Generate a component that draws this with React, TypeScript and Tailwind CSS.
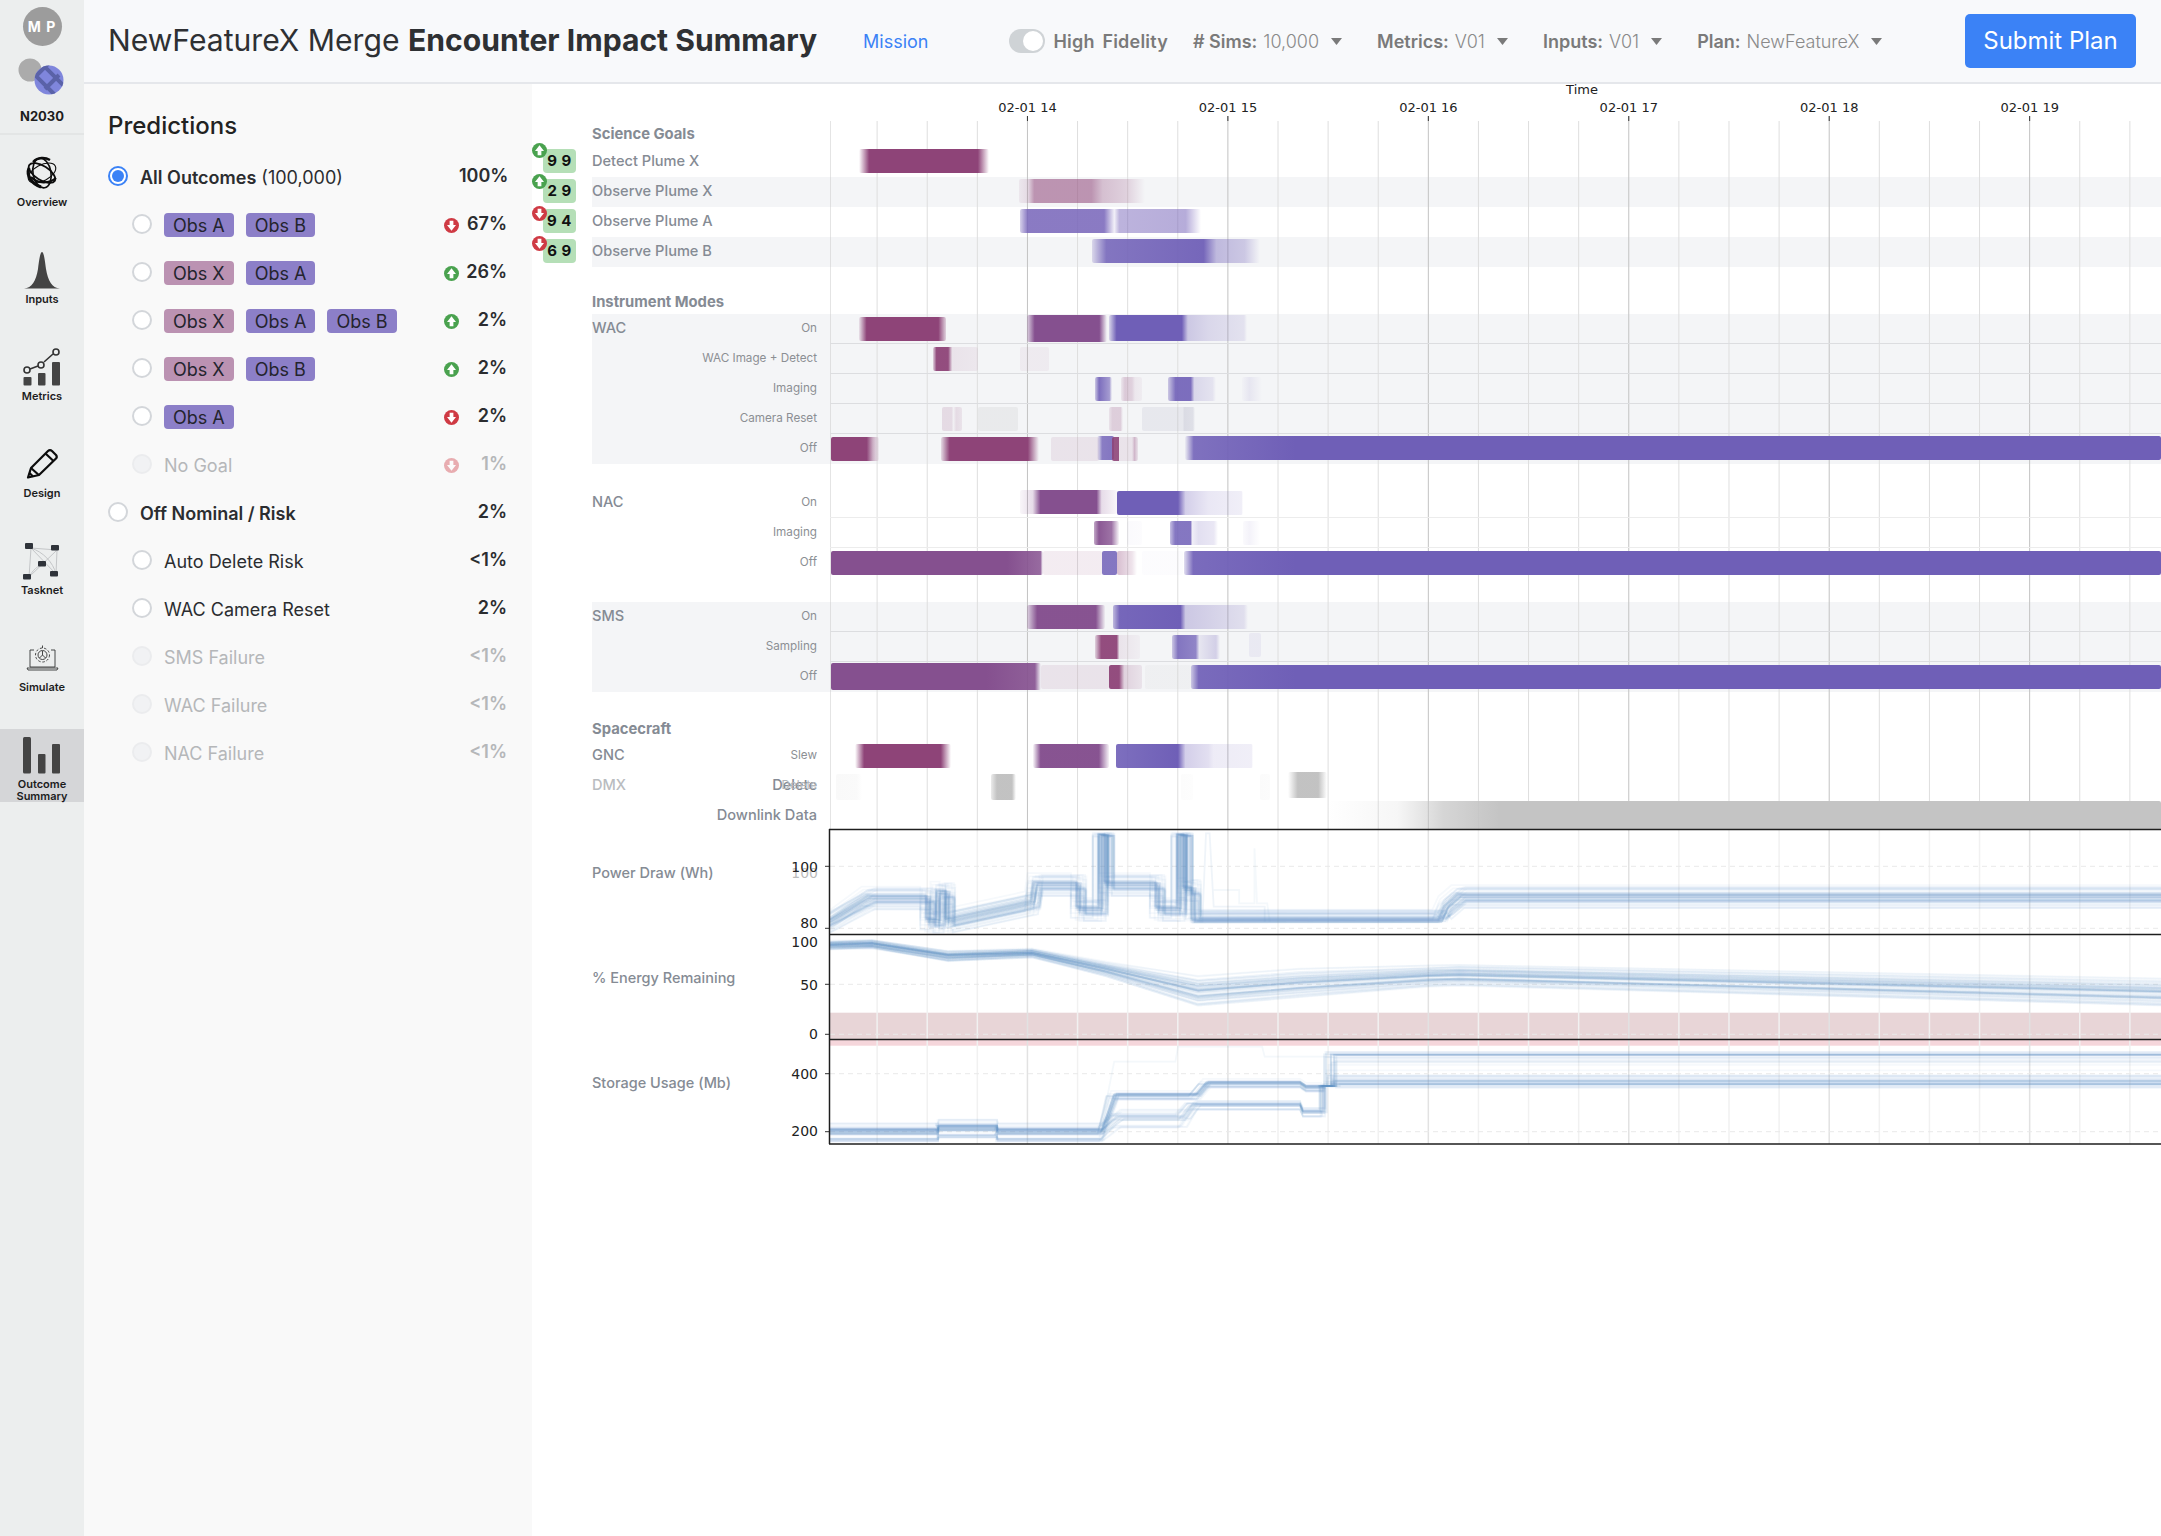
import React from "react";

const M = "#8e4478";
const MP = "#85508f";
const P = "#6f5fb7";
const G = "#9a9a9a";
const END = 3197;

type Stop = [number, number];
type Bar = { c: string; s: Stop[]; t?: number; h?: number };

function hex(c: string, a: number) {
  const r = parseInt(c.slice(1, 3), 16);
  const g = parseInt(c.slice(3, 5), 16);
  const b = parseInt(c.slice(5, 7), 16);
  return `rgba(${r},${g},${b},${a})`;
}

function BarView({ b }: { b: Bar }) {
  const x0 = b.s[0][0];
  const x1 = b.s[b.s.length - 1][0];
  const grad = b.s.map(([x, a]) => `${hex(b.c, a)} ${(((x - x0) / (x1 - x0)) * 100).toFixed(2)}%`).join(",");
  return (
    <div
      className="absolute z-10 rounded-[2px]"
      style={{
        left: x0 / 1.96 - 300,
        width: (x1 - x0) / 1.96,
        top: b.t ?? 2,
        height: b.h ?? 24,
        background: `linear-gradient(90deg,${grad})`,
      }}
    />
  );
}

function GRow({
  label,
  sub,
  bars,
  striped,
  sep,
  dim,
  bigSub,
  score,
}: {
  label?: string;
  sub?: string;
  bars: Bar[];
  striped?: boolean;
  sep?: string;
  dim?: boolean;
  bigSub?: boolean;
  score?: { v: string; up: boolean; iconTop: string };
}) {
  return (
    <div className={`flex h-[30px] ${striped ? "bg-[#f4f5f7]" : ""}`}>
      <div className="relative flex w-[238px] items-center justify-between pr-[13px]">
        {score && (
          <>
            <div className="absolute left-[-49px] top-[2px] flex h-[24px] w-[33px] items-center justify-center rounded-[4px] bg-[#b5dfb7] text-[15px] font-bold tracking-[0.5px] text-[#111]">
              {score.v}
            </div>
            <div className={`absolute left-[-60px] z-20 ${score.iconTop}`}>
              <Arrow up={score.up} />
            </div>
          </>
        )}
        <span className={`text-[14.6px] font-medium ${dim ? "text-[#b9bcc0]" : "text-[#858b94]"}`}>{label}</span>
        {sub && <span className={bigSub ? "text-[14.6px] font-medium text-[#858b94]" : "text-[11.7px] text-[#8c8f94]"}>{sub}</span>}
      </div>
      <div className={`relative flex-1 ${sep ?? ""}`}>
        {bars.map((b, i) => (
          <BarView key={i} b={b} />
        ))}
      </div>
    </div>
  );
}

function Section({ children, cls }: { children: React.ReactNode; cls: string }) {
  return <div className={`flex items-center text-[14.8px] font-bold text-[#858b94] ${cls}`}>{children}</div>;
}

function Arrow({ up, faded }: { up: boolean; faded?: boolean }) {
  const c = up ? "#4aa24f" : "#cf3a44";
  return (
    <svg width="15" height="15" viewBox="0 0 16 16" className={faded ? "opacity-40" : ""}>
      <circle cx="8" cy="8" r="8" fill={c} />
      <path
        d={up ? "M8 2.5 L12.8 8.5 H10 V13 H6 V8.5 H3.2 Z" : "M8 13.5 L12.8 7.5 H10 V3 H6 V7.5 H3.2 Z"}
        fill="#fff"
      />
    </svg>
  );
}

function Tag({ k }: { k: string }) {
  const pink = k === "Obs X";
  return (
    <span
      className={`flex h-[24px] items-center rounded-[4px] px-[9px] text-[18px] text-[#24242e] ${
        pink ? "bg-[#bb92b2]" : "bg-[#8c7fc8]"
      }`}
    >
      {k}
    </span>
  );
}

function Radio({ on, off }: { on?: boolean; off?: boolean }) {
  if (on)
    return (
      <span className="flex h-[20px] w-[20px] items-center justify-center rounded-full border-2 border-[#3b82f6] bg-white">
        <span className="h-[12px] w-[12px] rounded-full bg-[#3b82f6]" />
      </span>
    );
  return (
    <span
      className={`block h-[20px] w-[20px] rounded-full border-2 ${
        off ? "border-[#ebecee] bg-[#f1f2f4]" : "border-[#d3d6da] bg-white"
      }`}
    />
  );
}

function Pred({
  level,
  radio,
  off,
  children,
  arrow,
  pct,
}: {
  level: 0 | 1;
  radio?: boolean;
  off?: boolean;
  children: React.ReactNode;
  arrow?: "up" | "down";
  pct: string;
}) {
  return (
    <div className={`flex h-[48px] items-center pr-[25px] ${level === 0 ? "pl-[24px]" : "pl-[48px]"}`}>
      <span className="-mt-[3px] mr-[12px]">
        <Radio on={radio} off={off} />
      </span>
      <div className={`flex flex-1 items-center gap-[12px] text-[18px] ${off ? "text-[#b5b7b9]" : "text-[#2b2d30]"}`}>
        {children}
      </div>
      {arrow && (
        <span className="flex">
          <Arrow up={arrow === "up"} faded={off} />
        </span>
      )}
      <span className={`-mt-[3px] w-[48px] whitespace-nowrap text-right text-[18px] font-semibold ${off ? "text-[#b5b7b9]" : "text-[#2b2d30]"}`}>
        {pct}
      </span>
    </div>
  );
}

function Nav({
  label,
  icon,
  active,
}: {
  label: React.ReactNode;
  icon: React.ReactNode;
  active?: boolean;
}) {
  return (
    <div className={`flex h-[73px] flex-col items-center ${active ? "bg-[#d5d6d8]" : ""}`}>
      <div className="flex h-[49px] items-center justify-center pt-[3px]">{icon}</div>
      <div className="text-center text-[11px] font-semibold leading-[12px] text-[#1c1c1c]">{label}</div>
    </div>
  );
}

const IOverview = (
  <svg width="34" height="34" viewBox="0 0 34 34" fill="none" stroke="#0c0c0c">
    <ellipse cx="17" cy="17" rx="15" ry="7" transform="rotate(32 17 17)" strokeWidth="1.8" />
    <ellipse cx="17" cy="17" rx="15" ry="8" transform="rotate(-28 17 17)" strokeWidth="1.1" />
    <ellipse cx="17" cy="17" rx="15" ry="9" transform="rotate(80 17 17)" strokeWidth="1.6" />
    <path d="M4 12 C1 20 7 28 16 31" strokeWidth="3.2" />
    <path d="M6 21 C13 28 24 28 31 22" strokeWidth="2.2" />
    <path d="M8 6 C13 1 20 1 25 4" strokeWidth="2.4" />
  </svg>
);
const IInputs = (
  <svg width="36" height="38" viewBox="0 0 36 38">
    <path d="M0 37.5 C8 37 12 30 14 18 C15.5 6 16.5 1 18 1 C19.5 1 20.5 6 22 18 C24 30 28 37 36 37.5 Z" fill="#444" />
  </svg>
);
const IMetrics = (
  <svg width="38" height="38" viewBox="0 0 38 38">
    <g fill="#444">
      <rect x="0.5" y="29" width="8" height="8.5" rx="1" />
      <rect x="15" y="25" width="7.5" height="12.5" rx="1" />
      <rect x="29" y="14" width="8" height="23.5" rx="1" />
    </g>
    <g fill="none" stroke="#333" strokeWidth="1.6">
      <path d="M7 21 L15 18 M21 14 L30 6" />
      <circle cx="4" cy="22" r="3" />
      <circle cx="18" cy="17" r="3" />
      <circle cx="33" cy="4" r="3" />
    </g>
  </svg>
);
const IDesign = (
  <svg width="32" height="32" viewBox="0 0 32 32" fill="none" stroke="#0c0c0c" strokeWidth="2.2" strokeLinejoin="round">
    <path d="M2 29.5 L5 20 L22 3 Q24 1 26 3 L30 7 Q31.5 9 30 10.5 L13 27 Z" />
    <path d="M19.5 5.5 L27.5 13 M5 20 L12.8 27 M3.5 25 L7 28.5" />
  </svg>
);
const ITasknet = (
  <svg width="38" height="38" viewBox="0 0 38 38" fill="none">
    <g stroke="#c4c6c8" strokeWidth="1">
      <path d="M8 6 L34 8 L33 32 M8 6 L6 35 M8 6 L33 32 M34 8 L6 35 M8 6 C20 10 30 20 33 32 M6 35 C10 28 14 24 21 22" />
    </g>
    <g fill="#2f333a">
      <rect x="2" y="1" width="8" height="6" rx="1" />
      <rect x="28" y="3" width="8" height="5.5" rx="1" />
      <rect x="15" y="19" width="8" height="5.5" rx="1" />
      <rect x="0" y="32" width="8" height="5.5" rx="1" />
      <rect x="27" y="29" width="8" height="5.5" rx="1" />
    </g>
  </svg>
);
const ISimulate = (
  <svg width="33" height="26" viewBox="0 0 33 26" fill="none" stroke="#333" strokeWidth="0.9">
    <path d="M8 5 H4 V22 H29 V5 H25" />
    <path d="M1 23 H32 L31 25 H2 Z" />
    <circle cx="16.5" cy="10" r="4.5" />
    <circle cx="16.5" cy="10" r="7" strokeDasharray="2.5 1.8" />
    <path d="M16.5 10 L13.5 13 M16.5 10 L19.5 13 M16.5 10 V6 M16.5 0.5 V3" />
  </svg>
);
const IOutcome = (
  <svg width="38" height="37" viewBox="0 0 38 37" fill="#444">
    <rect x="0" y="0" width="8" height="36.5" rx="1.5" />
    <rect x="15" y="17" width="7.5" height="19.5" rx="1" />
    <rect x="29" y="7" width="8" height="29.5" rx="1" />
  </svg>
);

const Sci: { l: string; v: string; up: boolean; iconTop: string; bars: Bar[] }[] = [
  { l: "Detect Plume X", v: "9 9", up: true, iconTop: "top-[-4px]", bars: [{ c: M, s: [[645, 0], [665, 1], [878, 1], [900, 0]] }] },
  {
    l: "Observe Plume X",
    v: "2 9",
    up: true,
    iconTop: "top-[-3px]",
    bars: [{ c: M, s: [[958, 0.08], [975, 0.15], [988, 0.55], [1100, 0.55], [1122, 0.3], [1170, 0.2], [1205, 0]] }],
  },
  {
    l: "Observe Plume A",
    v: "9 4",
    up: false,
    iconTop: "top-[-1px]",
    bars: [{ c: "#7a68bb", s: [[960, 0.3], [975, 0.88], [1125, 0.88], [1145, 0.1], [1155, 0.5], [1285, 0.55], [1315, 0]] }],
  },
  {
    l: "Observe Plume B",
    v: "6 9",
    up: false,
    iconTop: "top-[-1px]",
    bars: [{ c: P, s: [[1102, 0.2], [1130, 0.85], [1320, 0.95], [1345, 0.4], [1400, 0.3], [1430, 0]] }],
  },
];

const WAC: { s: string; bars: Bar[] }[] = [
  {
    s: "On",
    bars: [
      { c: M, s: [[645, 0.1], [660, 1], [800, 1], [815, 0.2]], t: 3 },
      { c: MP, s: [[975, 0.2], [990, 1], [1115, 1], [1130, 0]], t: 1, h: 27 },
      { c: P, s: [[1135, 0.2], [1150, 1], [1278, 1], [1290, 0.3], [1330, 0.2], [1400, 0.13], [1406, 0]], t: 1, h: 26 },
    ],
  },
  {
    s: "WAC Image + Detect",
    bars: [
      { c: M, s: [[790, 0.2], [797, 0.95], [820, 0.95], [828, 0.1], [878, 0.08], [879, 0]], t: 3 },
      { c: M, s: [[960, 0.06], [1017, 0.06]], t: 3 },
    ],
  },
  {
    s: "Imaging",
    bars: [
      { c: P, s: [[1107, 0.3], [1115, 0.9], [1135, 0.6], [1140, 0]], t: 3 },
      { c: M, s: [[1158, 0.08], [1166, 0.25], [1180, 0.2], [1186, 0.08], [1200, 0.05]], t: 3 },
      { c: P, s: [[1250, 0.3], [1265, 0.9], [1295, 0.9], [1302, 0.2], [1338, 0.12], [1345, 0]], t: 3 },
      { c: P, s: [[1395, 0.02], [1410, 0.1], [1435, 0]], t: 3 },
    ],
  },
  {
    s: "Camera Reset",
    bars: [
      { c: M, s: [[808, 0.15], [826, 0.15], [830, 0.03], [835, 0.15], [846, 0.1]], t: 3 },
      { c: G, s: [[878, 0.12], [957, 0.12]], t: 3 },
      { c: M, s: [[1135, 0.1], [1142, 0.22], [1158, 0.22], [1163, 0]], t: 3 },
      { c: "#8a8aa8", s: [[1200, 0.12], [1280, 0.12], [1283, 0.24], [1300, 0.2], [1304, 0]], t: 3 },
    ],
  },
  {
    s: "Off",
    bars: [
      { c: M, s: [[590, 1], [660, 1], [672, 0.4], [684, 0.05]], t: 3 },
      { c: M, s: [[805, 0.15], [822, 1], [975, 1], [997, 0]], t: 3 },
      { c: M, s: [[1022, 0.1], [1115, 0.1]], t: 3 },
      { c: P, s: [[1112, 0], [1122, 0.8], [1145, 0.85]], t: 2 },
      { c: M, s: [[1140, 0.9], [1153, 0.9], [1155, 0.1], [1180, 0.1], [1185, 0.35], [1192, 0.1]], t: 3 },
      { c: P, s: [[1283, 0.05], [1300, 0.88], [1500, 1], [END, 1]], t: 2 },
    ],
  },
];

const NAC: { s: string; bars: Bar[] }[] = [
  {
    s: "On",
    bars: [
      { c: MP, s: [[960, 0.05], [985, 0.2], [1000, 1], [1110, 1], [1120, 0.2], [1150, 0.05]], t: 2 },
      { c: P, s: [[1150, 1], [1270, 1], [1285, 0.3], [1330, 0.15], [1395, 0.1], [1398, 0]], t: 3 },
    ],
  },
  {
    s: "Imaging",
    bars: [
      { c: MP, s: [[1105, 0.5], [1115, 0.95], [1140, 0.8], [1155, 0.05]], t: 3 },
      { c: P, s: [[1170, 0.03], [1200, 0.02]], t: 3 },
      { c: P, s: [[1255, 0.4], [1265, 0.85], [1295, 0.85], [1298, 0.1], [1310, 0.2], [1340, 0.15], [1348, 0]], t: 3 },
      { c: P, s: [[1398, 0.03], [1410, 0.08], [1430, 0]], t: 3 },
    ],
  },
  {
    s: "Off",
    bars: [
      { c: MP, s: [[590, 1], [935, 1], [1000, 0.85], [1005, 0]], t: 3 },
      { c: M, s: [[1005, 0.1], [1122, 0.1]], t: 3 },
      { c: P, s: [[1122, 0.85], [1150, 0.85]], t: 3 },
      { c: M, s: [[1150, 0.35], [1180, 0.15], [1190, 0]], t: 3 },
      { c: P, s: [[1200, 0.02], [1280, 0.02]], t: 3 },
      { c: P, s: [[1282, 0.2], [1300, 0.92], [1500, 1], [END, 1]], t: 3 },
    ],
  },
];

const SMS: { s: string; bars: Bar[] }[] = [
  {
    s: "On",
    bars: [
      { c: MP, s: [[975, 0.2], [995, 0.98], [1110, 0.98], [1128, 0.05]], t: 3 },
      { c: P, s: [[1142, 0.4], [1155, 0.95], [1275, 1], [1285, 0.3], [1325, 0.25], [1400, 0.15], [1408, 0]], t: 3 },
    ],
  },
  {
    s: "Sampling",
    bars: [
      { c: M, s: [[1108, 0.2], [1120, 0.95], [1150, 0.95], [1155, 0.1], [1195, 0.04]], t: 3 },
      { c: P, s: [[1258, 0.3], [1270, 0.85], [1305, 0.75], [1312, 0.1], [1345, 0.25], [1353, 0]], t: 3 },
      { c: P, s: [[1410, 0.08], [1432, 0.08]], t: 1 },
    ],
  },
  {
    s: "Off",
    bars: [
      { c: MP, s: [[590, 1], [895, 1], [990, 0.9], [1002, 0]], t: 1, h: 27 },
      { c: M, s: [[1002, 0.1], [1135, 0.1]], t: 3 },
      { c: M, s: [[1135, 0.95], [1155, 0.95], [1165, 0.2], [1200, 0.1]], t: 3 },
      { c: G, s: [[1205, 0.06], [1295, 0.06]], t: 3 },
      { c: P, s: [[1295, 0.3], [1310, 0.92], [1500, 1], [END, 1]], t: 3 },
    ],
  },
];

const GNC: Bar[] = [
  { c: M, s: [[637, 0], [655, 1], [805, 1], [825, 0]], t: 3 },
  { c: MP, s: [[985, 0.05], [1000, 0.98], [1115, 0.98], [1135, 0.08]], t: 3 },
  { c: P, s: [[1148, 0.9], [1270, 1], [1285, 0.3], [1330, 0.2], [1340, 0.12], [1415, 0.1], [1418, 0]], t: 3 },
];
const DMX: Bar[] = [
  { c: G, s: [[600, 0.06], [640, 0.05], [650, 0]], t: 3, h: 26 },
  { c: G, s: [[903, 0.2], [915, 0.6], [945, 0.6], [953, 0]], t: 3, h: 26 },
  { c: G, s: [[1275, 0.03], [1300, 0.02]], t: 3, h: 26 },
  { c: G, s: [[1430, 0.04], [1450, 0.03]], t: 3, h: 26 },
  { c: G, s: [[1486, 0], [1505, 0.6], [1545, 0.6], [1562, 0]], t: 1, h: 26 },
];
const DOWN: Bar[] = [{ c: "#c4c4c4", s: [[1562, 0], [1700, 0.15], [1760, 0.5], [1790, 0.7], [1900, 1], [END, 1]], t: 0, h: 29 }];

const gridLines: { x: number; major: boolean }[] = [];
for (let n = -3; 1027.45 + 50.11 * n < 2161; n++) {
  gridLines.push({ x: 1027.45 + 50.11 * n, major: n % 4 === 0 });
}

function makeRng(seed: number) {
  let a = seed;
  return () => {
    a |= 0;
    a = (a + 0x6d2b79f5) | 0;
    let t = Math.imul(a ^ (a >>> 15), 1 | a);
    t = (t + Math.imul(t ^ (t >>> 7), 61 | t)) ^ t;
    return ((t ^ (t >>> 14)) >>> 0) / 4294967296;
  };
}

type Pt = [number, number];
const toD = (p: Pt[]) => "M" + p.map(([x, y]) => `${x.toFixed(1)} ${y.toFixed(1)}`).join(" L");

const z6 = (X: number, Y: number): Pt => [530 + X / 1.96, 790 + Y / 3];

const powerBase: Pt[] = [
  z6(588, 395), z6(665, 325), z6(780, 325), z6(780, 395), z6(800, 395), z6(800, 310), z6(818, 310), z6(818, 395),
  z6(985, 340), z6(990, 285), z6(1075, 285), z6(1075, 360), z6(1118, 360), z6(1118, 135), z6(1130, 135), z6(1130, 285),
  z6(1230, 285), z6(1230, 360), z6(1272, 360), z6(1272, 135), z6(1284, 135), z6(1284, 300), z6(1300, 300), z6(1300, 395),
  [1440, 921.5], [1446, 908], [1459, 897], [2161, 897],
];

function powerLines() {
  const r = makeRng(7);
  const out: { d: string; o: number }[] = [];
  for (let i = 0; i < 60; i++) {
    const core = i < 14;
    const dy = (r() - 0.5) * (core ? 8 : 24);
    const dx = (r() - 0.5) * (core ? 6 : 16);
    const p = powerBase.map(([x, y], k): Pt => {
      const spike = y < 850;
      const low = x > 1190 && x < 1441 && k > 22;
      return [x + (x > 840 && x < 2160 ? dx : 0), y + (spike ? dy * 0.2 : low ? -Math.abs(dy) * 1.1 + 1 : dy)];
    });
    out.push({ d: toD(p), o: core ? 0.1 : 0.06 });
  }
  out.push({ d: toD([z6(1300, 395), z6(1318, 395), z6(1325, 130), z6(1332, 130), z6(1340, 350), z6(1440, 350), z6(1440, 395)]), o: 0.1 });
  out.push({ d: toD([z6(1340, 300), z6(1390, 300), z6(1390, 340), z6(1420, 340), z6(1420, 175), z6(1425, 340), z6(1445, 340), z6(1450, 395)]), o: 0.07 });
  return out;
}

const energyBase: [number, number, number][] = [
  [830, 945, 5], [872, 944, 5], [948, 956, 6], [1032, 953, 5], [1106, 969, 8], [1198, 991, 17], [1300, 983, 16], [1428, 976, 12], [1459, 975, 12], [2161, 992, 16],
];
function energyLines() {
  const r = makeRng(21);
  const out: { d: string; o: number }[] = [];
  for (let i = 0; i < 56; i++) {
    const core = i < 14;
    const u = (r() * 2 - 1) * (core ? 0.45 : 1);
    const p = energyBase.map(([x, y, s]): Pt => [x, y + u * s + (r() - 0.5) * 1.5]);
    out.push({ d: toD(p), o: core ? 0.12 : 0.06 });
  }
  return out;
}

function storageLines() {
  const r = makeRng(3);
  const levels = [1055, 1055, 1055, 1070, 1075, 1081.7, 1081.7, 1085, 1085, 1062, 1078];
  const out: { d: string; o: number }[] = [];
  for (let i = 0; i < 60; i++) {
    const core = i % 4 === 0;
    const upper = r() > 0.45;
    const dy = (r() - 0.5) * (core ? 6 : 20);
    const lv = levels[Math.floor(r() * levels.length)] + (r() - 0.5) * (core ? 2 : 7);
    const jx = (r() - 0.5) * 16;
    const head: Pt[] = [[830, 1131.7 + dy], [938, 1131.7 + dy], [938 + jx / 4, 1128 + dy], [997, 1128 + dy], [997 + jx / 4, 1131.7 + dy], [1101 + jx / 2, 1131.7 + dy]];
    const d2 = dy * 0.5;
    const tail: Pt[] = upper
      ? [[1113 + jx, 1095 + d2], [1195 + jx, 1095 + d2], [1205 + jx, 1083 + d2], [1300, 1083 + d2], [1306, 1087 + d2], [1322 + jx / 2, 1087 + d2], [1322 + jx / 2, 1086], [1330 + jx, 1086], [1330 + jx, lv], [2161, lv]]
      : [[1117 + jx, 1118 + d2 * 2], [1183 + jx, 1118 + d2 * 2], [1193 + jx, 1105 + d2], [1300, 1105 + d2], [1303, 1112 + d2], [1323 + jx / 2, 1112 + d2], [1323 + jx / 2, 1086], [1332 + jx, 1086], [1332 + jx, lv], [2161, lv]];
    out.push({ d: toD([...head, ...tail]), o: core ? 0.12 : 0.06 });
  }
  out.push({ d: toD([z6(1120, 1010), z6(1145, 815), z6(1265, 815), z6(1270, 770), z6(1435, 770), z6(1440, 800), z6(1568, 800)]), o: 0.07 });
  return out;
}

const chartData = [
  { top: 829, dashes: [866.3, 928.3], lines: powerLines() },
  { top: 934, dashes: [984.3, 1034.3], lines: energyLines() },
  { top: 1039, dashes: [1073.7, 1131.7], lines: storageLines() },
];

function Chart({ index, last }: { index: number; last?: boolean }) {
  const { top, dashes, lines } = chartData[index];
  return (
    <svg width="1332" height="106" viewBox={`829 ${top} 1332 106`} className="block overflow-visible">
      {index === 1 && (
        <>
          <rect x="830" y="1012.7" width="1331" height="26.3" fill="#e8d5d7" />
          <rect x="830" y="1039" width="1331" height="6.7" fill="#f5d6db" />
        </>
      )}
      {gridLines.map((g, i) => (
        <line key={i} x1={g.x} x2={g.x} y1={top} y2={top + 105} stroke={g.major ? "#e2e2e2" : "#f1f1f1"} strokeWidth="1.5" />
      ))}
      {dashes.map((y) => (
        <g key={y}>
          <line x1="830" x2="2161" y1={y} y2={y} stroke="#e9e9e9" strokeWidth="1" strokeDasharray="5 4" />
          <line x1="825" x2="830" y1={y} y2={y} stroke="#333" strokeWidth="1" />
        </g>
      ))}
      {lines.map((l, i) => (
        <path key={i} d={l.d} fill="none" stroke="#5f95c8" strokeOpacity={l.o} strokeWidth="1.8" />
      ))}
      <line x1="829" x2="2161" y1={top + 0.5} y2={top + 0.5} stroke="#1e1e1e" strokeWidth="1.5" />
      <line x1="829.5" x2="829.5" y1={top} y2={top + 105} stroke="#1e1e1e" strokeWidth="1.5" />
      {last && <line x1="829" x2="2161" y1={top + 105} y2={top + 105} stroke="#1e1e1e" strokeWidth="1.5" />}
    </svg>
  );
}

function ChartRow({
  label,
  index,
  last,
  ticks,
}: {
  label: string;
  index: number;
  last?: boolean;
  ticks: { t: string; cls: string }[];
}) {
  return (
    <div className="flex h-[105px]">
      <div className="relative flex w-[238px] items-center pb-[17px] text-[14.5px] font-medium text-[#858b94]">
        {label}
        {ticks.map((k) => (
          <span key={k.cls} className={`absolute right-[11px] -translate-y-1/2 text-[14px] leading-none text-[#222] [font-family:'DejaVu_Sans',sans-serif] ${k.cls}`}>
            {k.t}
          </span>
        ))}
      </div>
      <div className="relative flex-1">
        <Chart index={index} last={last} />
      </div>
    </div>
  );
}

function Drop({ k, v, cls }: { k: string; v: string; cls: string }) {
  return (
    <div className={`flex items-center text-[18px] text-[#8a8a8a] ${cls}`}>
      <b className="mr-[6px] font-semibold text-[#7a7a7a]">{k}</b>
      <span className="font-light">{v}</span>
      <svg width="11" height="7" viewBox="0 0 11 7" className="ml-[12px]">
        <path d="M0 0 H11 L5.5 7 Z" fill="#7a7a7a" />
      </svg>
    </div>
  );
}

export default function App() {
  return (
    <div className="flex min-h-screen w-full bg-white [font-family:Inter,sans-serif]">
      <aside className="flex w-[84px] shrink-0 flex-col bg-[#eceeee]">
        <div className="flex h-[135px] flex-col items-center border-b-2 border-[#e3e5e5]">
          <div className="mt-[7px] flex h-[39px] w-[39px] items-center justify-center rounded-full bg-[#9c9c9c] text-[14px] font-bold tracking-[1px] text-white">
            M P
          </div>
          <svg width="50" height="38" viewBox="0 0 50 38" className="mt-[11px]">
            <defs>
              <clipPath id="logoClip">
                <circle cx="32" cy="23" r="14.5" />
              </clipPath>
            </defs>
            <circle cx="13" cy="13" r="11.5" fill="#ababab" />
            <circle cx="32" cy="23" r="14.5" fill="#7f86dc" />
            <g clipPath="url(#logoClip)" stroke="#5a62a8" strokeWidth="4">
              <path d="M22 4 L50 32 M14 14 L38 38 M28 32 L42 18 M34 4 L20 18" />
            </g>
          </svg>
          <div className="mt-[13px] text-[13px] font-bold leading-[16px] text-[#1c1c1c]">N2030</div>
        </div>
        <div className="mt-[12px] flex flex-col gap-[24px]">
          <Nav label="Overview" icon={IOverview} />
          <Nav label="Inputs" icon={IInputs} />
          <Nav label="Metrics" icon={IMetrics} />
          <Nav label="Design" icon={IDesign} />
          <Nav label="Tasknet" icon={ITasknet} />
          <Nav label="Simulate" icon={ISimulate} />
          <Nav
            active
            label={
              <>
                Outcome
                <br />
                Summary
              </>
            }
            icon={IOutcome}
          />
        </div>
      </aside>

      <div className="flex min-w-0 flex-1 flex-col">
        <header className="flex h-[84px] items-center border-b-2 border-[#e5e7eb] bg-[#f8f9fb] pl-[24px]">
          <h1 className="text-[30.12px] font-normal text-[#2e3033]">
            NewFeatureX Merge <b className="font-bold">Encounter Impact Summary</b>
          </h1>
          <a className="ml-[46px] text-[18px] text-[#3b82f6]">Mission</a>
          <div className="ml-[81px] flex h-[24px] w-[36px] items-center justify-end rounded-full bg-[#cfd3d6] pr-[2px]">
            <span className="h-[20px] w-[20px] rounded-full bg-white" />
          </div>
          <span className="ml-[8px] text-[18px] font-semibold tracking-[0.2px] text-[#7a7a7a] [word-spacing:3px]">High Fidelity</span>
          <Drop k="# Sims:" v="10,000" cls="ml-[25px]" />
          <Drop k="Metrics:" v="V01" cls="ml-[35px]" />
          <Drop k="Inputs:" v="V01" cls="ml-[35px]" />
          <Drop k="Plan:" v="NewFeatureX" cls="ml-[35px]" />
          <button className="ml-auto mr-[25px] h-[54px] w-[171px] rounded-[5px] bg-[#3b82f6] text-[24px] text-white">Submit Plan</button>
        </header>

        <div className="flex flex-1">
          <section className="w-[448px] shrink-0 bg-[#f9f9f9]">
            <h2 className="ml-[24px] mt-[24px] text-[24px] font-medium leading-[36px] text-[#222]">Predictions</h2>
            <div className="mt-[9px] flex flex-col">
              <Pred level={0} radio pct="100%">
                <span>
                  <b className="font-semibold">All Outcomes</b> (100,000)
                </span>
              </Pred>
              <Pred level={1} arrow="down" pct="67%">
                <Tag k="Obs A" />
                <Tag k="Obs B" />
              </Pred>
              <Pred level={1} arrow="up" pct="26%">
                <Tag k="Obs X" />
                <Tag k="Obs A" />
              </Pred>
              <Pred level={1} arrow="up" pct="2%">
                <Tag k="Obs X" />
                <Tag k="Obs A" />
                <Tag k="Obs B" />
              </Pred>
              <Pred level={1} arrow="up" pct="2%">
                <Tag k="Obs X" />
                <Tag k="Obs B" />
              </Pred>
              <Pred level={1} arrow="down" pct="2%">
                <Tag k="Obs A" />
              </Pred>
              <Pred level={1} off arrow="down" pct="1%">
                No Goal
              </Pred>
              <Pred level={0} pct="2%">
                <b className="font-semibold">Off Nominal / Risk</b>
              </Pred>
              <Pred level={1} pct="<1%">
                Auto Delete Risk
              </Pred>
              <Pred level={1} pct="2%">
                WAC Camera Reset
              </Pred>
              <Pred level={1} off pct="<1%">
                SMS Failure
              </Pred>
              <Pred level={1} off pct="<1%">
                WAC Failure
              </Pred>
              <Pred level={1} off pct="<1%">
                NAC Failure
              </Pred>
            </div>
          </section>

          <main className="relative min-w-0 flex-1 pl-[60px] text-[#858b94]">
            <svg width="1331" height="713" viewBox="830 116 1331 713" className="absolute left-[298px] top-[32px] z-0">
              <line x1="830" x2="830" y1="121" y2="829" stroke="#c9c9c9" strokeWidth="1" />
              {gridLines.map((g, i) => (
                <line
                  key={i}
                  x1={g.x}
                  x2={g.x}
                  y1={g.major ? 116 : 121}
                  y2="829"
                  stroke={g.major ? "#c2c2c2" : "#dedede"}
                  strokeWidth="1"
                />
              ))}
              {gridLines
                .filter((g) => g.major)
                .map((g, i) => (
                  <line key={i} x1={g.x} x2={g.x} y1="116" y2="121" stroke="#333" strokeWidth="1" />
                ))}
            </svg>

            <div className="relative h-[38px] text-[13px] text-[#222] [font-family:'DejaVu_Sans',sans-serif]">
              <span className="absolute left-[990px] top-[-1px] -translate-x-1/2 leading-[14px]">Time</span>
              {["14", "15", "16", "17", "18", "19"].map((h, i) => (
                <span key={h} className="absolute top-[16px] -translate-x-1/2 leading-[16px]" style={{ left: 435.5 + i * 200.45 }}>
                  02-01 {h}
                </span>
              ))}
            </div>

            <Section cls="h-[25px]">Science Goals</Section>
            {Sci.map((r, i) => (
              <GRow key={r.l} label={r.l} bars={r.bars} striped={i % 2 === 1} score={{ v: r.v, up: r.up, iconTop: r.iconTop }} />
            ))}

            <Section cls="mt-[24px] h-[23px]">Instrument Modes</Section>
            <div>
              {WAC.map((r, i) => (
                <GRow key={r.s} label={i === 0 ? "WAC" : undefined} sub={r.s} bars={r.bars} striped sep={i < 4 ? "border-b border-[#dcdde0]" : ""} />
              ))}
            </div>

            <div className="mt-[24px]">
              {NAC.map((r, i) => (
                <GRow key={r.s} label={i === 0 ? "NAC" : undefined} sub={r.s} bars={r.bars} sep={i < 2 ? "border-b border-[#ececec]" : ""} />
              ))}
            </div>

            <div className="mt-[24px]">
              {SMS.map((r, i) => (
                <GRow key={r.s} label={i === 0 ? "SMS" : undefined} sub={r.s} bars={r.bars} striped sep={i < 2 ? "border-b border-[#dcdde0]" : ""} />
              ))}
            </div>

            <Section cls="mt-[25px] h-[24px]">Spacecraft</Section>
            <GRow label="GNC" sub="Slew" bars={GNC} />
            <div className="relative">
              <GRow label="DMX" dim sub="Delete" bigSub bars={DMX} />
              <span className="absolute right-[1344px] top-[6px] text-[11.7px] text-[#b4b6ba]">Delete</span>
            </div>
            <div className="flex h-[30px]">
              <div className="flex w-[238px] items-center justify-end pr-[13px] text-[14.6px] font-medium text-[#858b94]">Downlink Data</div>
              <div className="relative flex-1">
                {DOWN.map((b, i) => (
                  <BarView key={i} b={b} />
                ))}
              </div>
            </div>

            <div className="relative z-10 -mt-[2px]">
              <ChartRow
                label="Power Draw (Wh)"
                index={0}
                ticks={[
                  { t: "100", cls: "top-[44px] opacity-30" },
                  { t: "100", cls: "top-[38px]" },
                  { t: "80", cls: "top-[94px]" },
                ]}
              />
              <ChartRow
                label="% Energy Remaining"
                index={1}
                ticks={[
                  { t: "100", cls: "top-[8px]" },
                  { t: "50", cls: "top-[51px]" },
                  { t: "0", cls: "top-[100px]" },
                ]}
              />
              <ChartRow
                label="Storage Usage (Mb)"
                index={2}
                last
                ticks={[
                  { t: "400", cls: "top-[35px]" },
                  { t: "200", cls: "top-[92px]" },
                ]}
              />
            </div>
          </main>
        </div>
      </div>
    </div>
  );
}
